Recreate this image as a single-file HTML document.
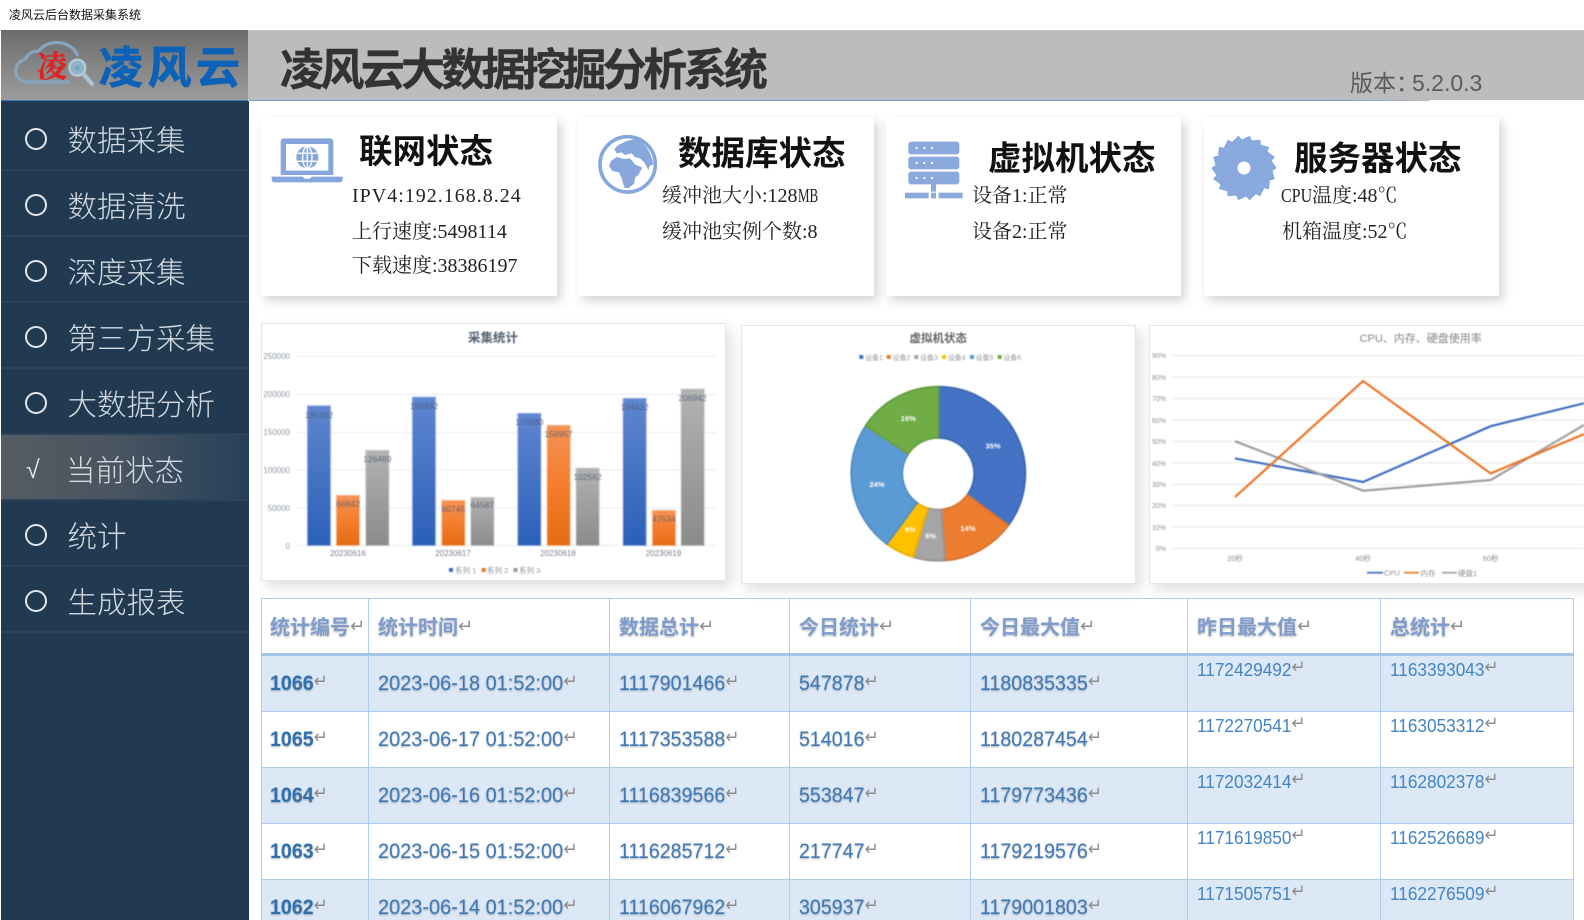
<!DOCTYPE html>
<html lang="zh">
<head>
<meta charset="utf-8">
<title>凌风云后台数据采集系统</title>
<style>
html,body{margin:0;padding:0;width:1584px;height:920px;overflow:hidden;background:#fff}
body{position:relative;font-family:"Liberation Sans","Noto Sans CJK SC",sans-serif}
.a{position:absolute;white-space:nowrap}
.bar{left:1px;top:30px;width:1583px;height:70px;background:#bcbcbc}
.line{left:249px;top:100px;width:1181px;height:1px;background:linear-gradient(90deg,#6f9fd2 0,#6f9fd2 92%,#bcbcbc 100%)}
.logo{left:1px;top:30px;width:247px;height:71px;background:linear-gradient(180deg,#6c6c6c,#9c9c9c);border-bottom:1px solid #3f78b8;box-sizing:border-box}
.side{left:1px;top:101px;width:248px;height:819px;background:#213a52}
.it{left:1px;width:248px;height:66px;box-sizing:border-box;border-bottom:2px solid #2c4459}
.it.on{background:linear-gradient(90deg,#555c63,#4a5560 45%,#26405a)}
.cir{left:25px;width:18px;height:18px;border:2px solid #e4e8ec;border-radius:50%}
.mt{left:67.5px;font-size:29.5px;line-height:40px;color:#d3dae1;font-weight:300;font-family:"Noto Sans CJK SC",sans-serif}
.card{top:117px;height:179px;background:#fff;box-shadow:4px 5px 10px rgba(0,0,0,.17)}
.ct{font:bold 33.5px/44px "Noto Sans CJK SC",sans-serif;color:#111}
.cl{font:20px/26px "Liberation Serif","Noto Serif CJK SC",serif;color:#222}
.cl u{display:inline-block;text-decoration:none;transform-origin:0 50%}
.box{background:#fff;border:1px solid #e3e6ec;box-sizing:border-box;box-shadow:5px 6px 12px rgba(0,0,0,.13)}
table{position:absolute;left:261px;top:598px;width:1312px;border-collapse:collapse;table-layout:fixed}
td{border:1px solid #aecdee;padding:0 0 0 9px;box-sizing:border-box;white-space:nowrap;overflow:hidden;vertical-align:middle;height:56px}
td:first-child{padding-left:8px}
thead td{font:bold 20px/26px "Noto Sans CJK SC",sans-serif;color:#7f9ccf;text-shadow:0 1px 2px rgba(0,0,0,.3);border-bottom:3px solid #a3c6e8}
tbody tr:nth-child(odd) td{background:#dce8f5}
tbody td{color:#3d79b9;font-size:21px;line-height:26px;text-shadow:0 1px 2px rgba(0,0,0,.32)}
tbody tr:first-child td{height:57px}
td span{display:inline-block;transform:scaleX(.935);transform-origin:0 50%}
td.d span{transform:scaleX(.95)}
td b{color:#2f70b1}
td.t{vertical-align:top;padding-top:3px;font-size:18.5px;line-height:22px;color:#4384c6;text-shadow:none}
td.t span{transform:scaleX(.93)}
i{font:normal 18px/13px "DejaVu Sans",sans-serif;color:#8d8d8d;vertical-align:3px;text-shadow:none;margin-left:0}
thead i{vertical-align:2px}
svg text{font-family:"Liberation Sans","Noto Sans CJK SC",sans-serif}
</style>
</head>
<body>
<div class="a" style="left:9px;top:7px;font-size:12px;line-height:16px;color:#111">凌风云后台数据采集系统</div>

<div class="a bar"></div>
<div class="a line"></div>
<div class="a" style="left:280px;top:38px;font:bold 44px/56px 'Noto Sans CJK SC',sans-serif;letter-spacing:-3.65px;color:#333;-webkit-text-stroke:.4px #333">凌风云大数据挖掘分析系统</div>
<div class="a" style="left:1350px;top:68px;font-size:23px;line-height:30px;color:#5a5a5a">版本：<span style="margin-left:-7px">5.2.0.3</span></div>

<div class="a logo"></div>
<svg class="a" style="left:0;top:20px" width="250" height="82" viewBox="0 0 750 246">
  <path d="M205 186H78C38 180 36 130 75 118C84 100 100 92 116 94C135 62 205 52 232 104" fill="none" stroke="#86a5bd" stroke-width="10" stroke-linecap="round"/>
  <circle cx="232" cy="143" r="24" fill="#8fb4c8" stroke="#b5cad6" stroke-width="7"/>
  <path d="M224 143h16M232 135v16" stroke="#6fa0c0" stroke-width="5"/>
  <path d="M250 162L276 192" stroke="#a9c6d6" stroke-width="13" stroke-linecap="round"/>
</svg>
<div class="a" style="left:37px;top:44px;font:bold 30px/40px 'Noto Serif CJK SC',serif;color:#e02222;-webkit-text-stroke:.5px #e02222">凌</div>
<div class="a" style="left:99px;top:38px;font:bold 44px/52px 'Noto Sans CJK SC',sans-serif;letter-spacing:4.5px;color:#0c62b7;-webkit-text-stroke:.8px #0c62b7">凌风云</div>

<div class="a side"></div>
<div class="a it" style="top:105px"></div>
<div class="a it" style="top:171px"></div>
<div class="a it" style="top:237px"></div>
<div class="a it" style="top:303px"></div>
<div class="a it" style="top:369px"></div>
<div class="a it on" style="top:435px"></div>
<div class="a it" style="top:501px"></div>
<div class="a it" style="top:567px"></div>
<div class="a cir" style="top:128px"></div>
<div class="a cir" style="top:194px"></div>
<div class="a cir" style="top:260px"></div>
<div class="a cir" style="top:326px"></div>
<div class="a cir" style="top:392px"></div>
<div class="a" style="left:26px;top:452px;font:25px/36px 'Liberation Sans',sans-serif;color:#e4e8ec">√</div>
<div class="a cir" style="top:524px"></div>
<div class="a cir" style="top:590px"></div>
<div class="a mt" style="top:119px">数据采集</div>
<div class="a mt" style="top:185px">数据清洗</div>
<div class="a mt" style="top:251px">深度采集</div>
<div class="a mt" style="top:317px">第三方采集</div>
<div class="a mt" style="top:383px">大数据分析</div>
<div class="a mt" style="top:449px;left:66px">当前状态</div>
<div class="a mt" style="top:515px">统计</div>
<div class="a mt" style="top:581px">生成报表</div>

<div class="a card" style="left:261px;width:296px"></div>
<div class="a card" style="left:578px;width:296px"></div>
<div class="a card" style="left:886px;width:295px"></div>
<div class="a card" style="left:1204px;width:295px"></div>

<svg class="a" style="left:0;top:0" width="1584" height="300" viewBox="0 0 1584 300">
  <g transform="translate(260 120) scale(.3333)" fill="#86a6dc">
    <path fill-rule="evenodd" d="M72 55H210Q220 55 220 65V165H62V65Q62 55 72 55ZM78 72V152H205V72Z"/>
    <path d="M35 170H128L133 176H150L155 170H248V178Q248 187 238 187H45Q35 187 35 178Z"/>
    <circle cx="142" cy="112" r="33"/>
    <g fill="none" stroke="#fff" stroke-width="4">
      <ellipse cx="142" cy="112" rx="14" ry="33"/><path d="M142 79V145M112 100H172M112 124H172"/>
    </g>
  </g>
  <g transform="translate(585 125) scale(.3333)">
    <circle cx="128" cy="118" r="83" fill="#fff" stroke="#85a9df" stroke-width="11"/>
    <path fill="#88a8dc" d="M88 72L100 60L125 48L150 42C180 50 200 85 205 118L195 122L190 135L178 112L165 100L150 96L140 85L120 90L110 82L95 85Z"/>
    <path fill="#88a8dc" d="M78 108L95 96L118 102L135 100L150 118L172 128L160 150L150 158L148 175L130 190L118 188L110 160L102 142L82 138L72 122Z"/>
  </g>
  <g transform="translate(890 130) scale(.3333)" fill="#8aa9dc">
    <rect x="55" y="35" width="153" height="38" rx="8"/>
    <rect x="55" y="80" width="153" height="38" rx="8"/>
    <rect x="55" y="125" width="153" height="38" rx="8"/>
    <rect x="123" y="163" width="15" height="22"/>
    <rect x="45" y="188" width="71" height="17"/><rect x="123" y="188" width="15" height="17"/><rect x="146" y="188" width="72" height="17"/>
    <g fill="#fff"><circle cx="80" cy="54" r="3.5"/><circle cx="103" cy="54" r="3.5"/><circle cx="126" cy="54" r="3.5"/><circle cx="80" cy="99" r="3.5"/><circle cx="103" cy="99" r="3.5"/><circle cx="126" cy="99" r="3.5"/><circle cx="80" cy="144" r="3.5"/><circle cx="103" cy="144" r="3.5"/><circle cx="126" cy="144" r="3.5"/></g>
  </g>
  <g transform="translate(1244 168)">
    <polygon fill="#8aa9dc" stroke="#7fa6de" points="32,0 27.9,2.4 30.1,10.9 25.4,11.8 24.5,20.6 19.8,19.8 16,27.7 11.8,25.4 5.6,31.5 2.4,27.9 -5.6,31.5 -7.2,27 -16,27.7 -16.1,22.9 -24.5,20.6 -22.9,16.1 -30.1,10.9 -27,7.2 -32,0 -27.9,-2.4 -30.1,-10.9 -25.4,-11.8 -24.5,-20.6 -19.8,-19.8 -16,-27.7 -11.8,-25.4 -5.6,-31.5 -2.4,-27.9 5.6,-31.5 7.2,-27 16,-27.7 16.1,-22.9 24.5,-20.6 22.9,-16.1 30.1,-10.9 27,-7.2"/>
    <circle r="6.5" fill="#fff"/>
  </g>
</svg>

<div class="a ct" style="left:359px;top:127px">联网状态</div>
<div class="a cl" style="left:352px;top:183px;letter-spacing:1px">IPV4:192.168.8.24</div>
<div class="a cl" style="left:352px;top:219px">上行速度:5498114</div>
<div class="a cl" style="left:352px;top:253px">下载速度:38386197</div>

<div class="a ct" style="left:678px;top:129px">数据库状态</div>
<div class="a cl" style="left:662px;top:183px">缓冲池大小:128<u style="width:20px;transform:scaleX(.65)">MB</u></div>
<div class="a cl" style="left:662px;top:219px">缓冲池实例个数:8</div>

<div class="a ct" style="left:988px;top:134px">虚拟机状态</div>
<div class="a cl" style="left:972px;top:183px">设备1:正常</div>
<div class="a cl" style="left:972px;top:219px">设备2:正常</div>

<div class="a ct" style="left:1294px;top:134px">服务器状态</div>
<div class="a cl" style="left:1281px;top:183px"><u style="width:31px;transform:scaleX(.8)">CPU</u>温度:48℃</div>
<div class="a cl" style="left:1282px;top:219px">机箱温度:52℃</div>

<div class="a box" style="left:261px;top:323px;width:465px;height:258px"></div>
<div class="a box" style="left:741px;top:325px;width:395px;height:259px"></div>
<div class="a box" style="left:1149px;top:325px;width:440px;height:259px"></div>

<svg class="a" style="left:0;top:300px;filter:blur(.4px)" width="1584" height="300" viewBox="0 300 1584 300">
  <defs>
    <linearGradient id="gb" x1="0" y1="0" x2="0" y2="1"><stop offset="0" stop-color="#5f86d0"/><stop offset="1" stop-color="#2b60b8"/></linearGradient>
    <linearGradient id="go" x1="0" y1="0" x2="0" y2="1"><stop offset="0" stop-color="#f39255"/><stop offset=".5" stop-color="#f47d2c"/><stop offset="1" stop-color="#e56c14"/></linearGradient>
    <linearGradient id="gg" x1="0" y1="0" x2="0" y2="1"><stop offset="0" stop-color="#b2b2b2"/><stop offset="1" stop-color="#8b8b8b"/></linearGradient>
  </defs>
  <!-- chart 1 -->
  <g stroke="#e8ebf2" stroke-width="1">
    <path d="M296 356.5H717M296 394.5H717M296 432.5H717M296 470H717M296 508H717M296 545.5H717"/>
  </g>
  <text x="493" y="342" text-anchor="middle" font-size="12.5" font-weight="bold" fill="#515d70">采集统计</text>
  <g font-size="8" fill="#8d95a3" text-anchor="end">
    <text x="290" y="359">250000</text><text x="290" y="397">200000</text><text x="290" y="435">150000</text><text x="290" y="473">100000</text><text x="290" y="511">50000</text><text x="290" y="549">0</text>
  </g>
  <g stroke-width="1">
    <g fill="url(#gb)" stroke="#a9bde6">
      <rect x="307.3" y="405.7" width="23.3" height="140"/><rect x="412.3" y="397" width="23.3" height="148.7"/><rect x="517.7" y="413.3" width="23.3" height="132.4"/><rect x="623" y="398.3" width="23.3" height="147.4"/>
    </g>
    <g fill="url(#go)" stroke="#f8c4a0">
      <rect x="336.3" y="495.3" width="23.3" height="50.4"/><rect x="441.7" y="500.3" width="23.3" height="45.4"/><rect x="547" y="425.3" width="23.3" height="120.4"/><rect x="652.3" y="510.3" width="23.3" height="35.4"/>
    </g>
    <g fill="url(#gg)" stroke="#d2d2d2">
      <rect x="365.7" y="450.3" width="23.3" height="95.4"/><rect x="470.7" y="497.3" width="23.3" height="48.4"/><rect x="576" y="468" width="23.3" height="77.7"/><rect x="681" y="389" width="23.3" height="156.7"/>
    </g>
  </g>
  <g font-size="8.5" fill="#4d5a70" text-anchor="middle" opacity=".8">
    <text x="319" y="418">185362</text><text x="348" y="507">66842</text><text x="377.3" y="462">126489</text>
    <text x="424" y="409">196842</text><text x="453.3" y="512">60745</text><text x="482.3" y="508">64587</text>
    <text x="529.3" y="425">175680</text><text x="558.6" y="437">158957</text><text x="587.6" y="480">102562</text>
    <text x="634.6" y="410">194632</text><text x="664" y="522">47534</text><text x="692.6" y="401">206942</text>
  </g>
  <g font-size="8" fill="#767f8d" text-anchor="middle">
    <text x="348" y="556">20230616</text><text x="453" y="556">20230617</text><text x="558" y="556">20230618</text><text x="663.5" y="556">20230619</text>
  </g>
  <rect x="449" y="568" width="4" height="4" fill="#3a6cc4"/><rect x="481.7" y="568" width="4" height="4" fill="#ef7b2c"/><rect x="513.5" y="568" width="4" height="4" fill="#999"/>
  <g font-size="7.5" fill="#8d95a3"><text x="455" y="573">系列 1</text><text x="487" y="573">系列 2</text><text x="519" y="573">系列 3</text></g>

  <!-- chart 2 -->
  <text x="938.3" y="342" text-anchor="middle" font-size="11.5" font-weight="bold" fill="#666">虚拟机状态</text>
  <g>
    <rect x="859.3" y="355" width="4" height="4" fill="#4472c4"/><rect x="886.7" y="355" width="4" height="4" fill="#ed7d31"/><rect x="914.3" y="355" width="4" height="4" fill="#a5a5a5"/><rect x="942" y="355" width="4" height="4" fill="#ffc000"/><rect x="970" y="355" width="4" height="4" fill="#5b9bd5"/><rect x="997.7" y="355" width="4" height="4" fill="#70ad47"/>
    <g font-size="7" fill="#9a9a9a"><text x="865" y="360">设备1</text><text x="892.5" y="360">设备2</text><text x="920" y="360">设备3</text><text x="947.7" y="360">设备4</text><text x="975.5" y="360">设备5</text><text x="1003.3" y="360">设备6</text></g>
  </g>
  <g stroke-width="2">
    <path fill="#4472c4" stroke="#3f69b4" d="M938.3 386.7A87 87 0 0 1 1008.4 525.2L967.3 495A36 36 0 0 0 938.3 437.7Z"/>
    <path fill="#ed7d31" stroke="#d8732e" d="M1008.4 525.2A87 87 0 0 1 945 560.4L941.1 509.6A36 36 0 0 0 967.3 495Z"/>
    <path fill="#a5a5a5" stroke="#979797" d="M945 560.4A87 87 0 0 1 913.2 557L927.9 508.2A36 36 0 0 0 941.1 509.6Z"/>
    <path fill="#ffc000" stroke="#e9b004" d="M913.2 557A87 87 0 0 1 886.9 543.9L917 502.8A36 36 0 0 0 927.9 508.2Z"/>
    <path fill="#5b9bd5" stroke="#548ec3" d="M886.9 543.9A87 87 0 0 1 865.7 425.8L908.2 453.9A36 36 0 0 0 917 502.8Z"/>
    <path fill="#70ad47" stroke="#679f42" d="M865.7 425.8A87 87 0 0 1 938.3 386.7V437.7A36 36 0 0 0 908.2 453.9Z"/>
  </g>
  <g font-size="7.5" font-weight="bold" fill="#fff" text-anchor="middle">
    <text x="993" y="448.5">35%</text><text x="968" y="531">14%</text><text x="930.7" y="538.5">6%</text><text x="910.3" y="532">5%</text><text x="877" y="487">24%</text><text x="908.3" y="421">16%</text>
  </g>

  <!-- chart 3 -->
  <path stroke="#e9e9e9" stroke-width="1" d="M1170 355.5H1584M1170 377H1584M1170 398.5H1584M1170 420H1584M1170 441.5H1584M1170 463H1584M1170 484.5H1584M1170 505.5H1584M1170 527H1584M1170 548.5H1584"/>
  <text x="1420.7" y="342" text-anchor="middle" font-size="11" fill="#858585">CPU、内存、硬盘使用率</text>
  <g font-size="7" fill="#8f8f8f" text-anchor="end">
    <text x="1166" y="358">90%</text><text x="1166" y="380">80%</text><text x="1166" y="401">70%</text><text x="1166" y="423">60%</text><text x="1166" y="444">50%</text><text x="1166" y="466">40%</text><text x="1166" y="487">30%</text><text x="1166" y="508">20%</text><text x="1166" y="530">10%</text><text x="1166" y="551">0%</text>
  </g>
  <g fill="none" stroke-width="2.2">
    <polyline stroke="#3f6ec4" points="1235,458.4 1363,482 1490.7,426.2 1584,403.3"/>
    <polyline stroke="#a0a0a0" points="1235,441.2 1363,490.7 1490.7,480 1584,425"/>
    <polyline stroke="#ee7426" points="1235,497.1 1363,381 1490.7,473.5 1584,434"/>
  </g>
  <g font-size="7.5" fill="#8d8d8d" text-anchor="middle"><text x="1235" y="561">20秒</text><text x="1363" y="561">40秒</text><text x="1490.7" y="561">60秒</text></g>
  <path stroke="#4472c4" stroke-width="1.8" d="M1367 572.7H1383"/><path stroke="#ed7d31" stroke-width="1.8" d="M1404 572.7H1419"/><path stroke="#a5a5a5" stroke-width="1.8" d="M1442 572.7H1457"/>
  <g font-size="7.5" fill="#8d8d8d"><text x="1384" y="575.5">CPU</text><text x="1420.5" y="576">内存</text><text x="1458" y="576">硬盘1</text></g>
</svg>

<table>
<colgroup><col style="width:107px"><col style="width:241px"><col style="width:180px"><col style="width:181px"><col style="width:217px"><col style="width:193px"><col style="width:193px"></colgroup>
<thead><tr><td>统计编号<i>↵</i></td><td>统计时间<i>↵</i></td><td>数据总计<i>↵</i></td><td>今日统计<i>↵</i></td><td>今日最大值<i>↵</i></td><td>昨日最大值<i>↵</i></td><td>总统计<i>↵</i></td></tr></thead>
<tbody>
<tr><td><span><b>1066</b><i>↵</i></span></td><td class="d"><span>2023-06-18 01:52:00<i>↵</i></span></td><td><span>1117901466<i>↵</i></span></td><td><span>547878<i>↵</i></span></td><td><span>1180835335<i>↵</i></span></td><td class="t"><span>1172429492<i>↵</i></span></td><td class="t"><span>1163393043<i>↵</i></span></td></tr>
<tr><td><span><b>1065</b><i>↵</i></span></td><td class="d"><span>2023-06-17 01:52:00<i>↵</i></span></td><td><span>1117353588<i>↵</i></span></td><td><span>514016<i>↵</i></span></td><td><span>1180287454<i>↵</i></span></td><td class="t"><span>1172270541<i>↵</i></span></td><td class="t"><span>1163053312<i>↵</i></span></td></tr>
<tr><td><span><b>1064</b><i>↵</i></span></td><td class="d"><span>2023-06-16 01:52:00<i>↵</i></span></td><td><span>1116839566<i>↵</i></span></td><td><span>553847<i>↵</i></span></td><td><span>1179773436<i>↵</i></span></td><td class="t"><span>1172032414<i>↵</i></span></td><td class="t"><span>1162802378<i>↵</i></span></td></tr>
<tr><td><span><b>1063</b><i>↵</i></span></td><td class="d"><span>2023-06-15 01:52:00<i>↵</i></span></td><td><span>1116285712<i>↵</i></span></td><td><span>217747<i>↵</i></span></td><td><span>1179219576<i>↵</i></span></td><td class="t"><span>1171619850<i>↵</i></span></td><td class="t"><span>1162526689<i>↵</i></span></td></tr>
<tr><td><span><b>1062</b><i>↵</i></span></td><td class="d"><span>2023-06-14 01:52:00<i>↵</i></span></td><td><span>1116067962<i>↵</i></span></td><td><span>305937<i>↵</i></span></td><td><span>1179001803<i>↵</i></span></td><td class="t"><span>1171505751<i>↵</i></span></td><td class="t"><span>1162276509<i>↵</i></span></td></tr>
</tbody>
</table>
</body>
</html>
